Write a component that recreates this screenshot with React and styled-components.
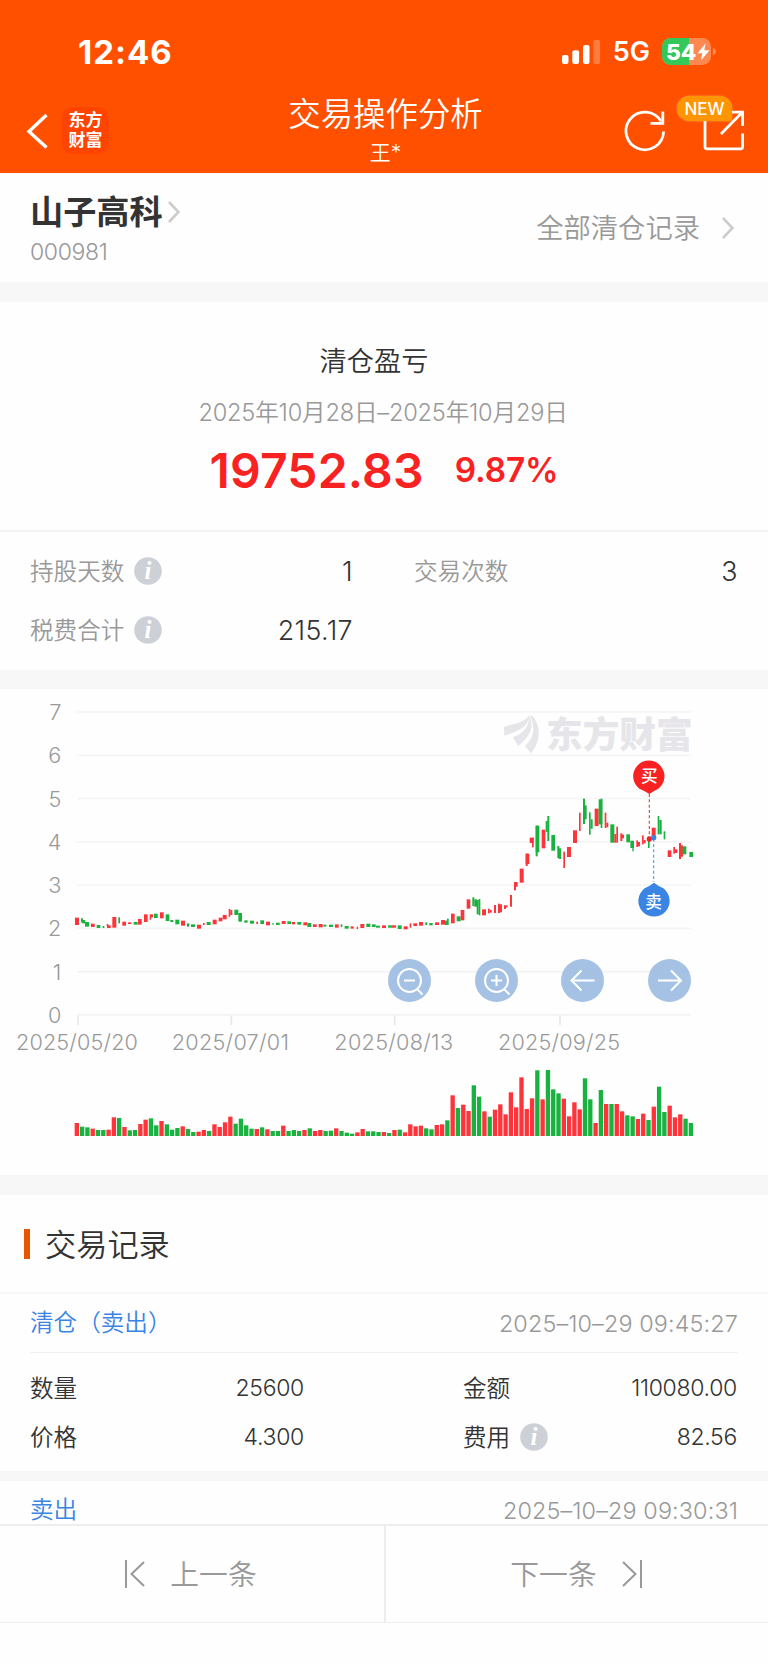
import React from "react"
import styled, { createGlobalStyle } from "styled-components"

const GlobalStyle = createGlobalStyle`
  * {
    box-sizing: border-box;
  }
  body {
    margin: 0;
    background: #fefefe;
    color: #333;
    font-family: Inter, "Noto Sans CJK SC", sans-serif;
    font-weight: 350;
    -webkit-font-smoothing: antialiased;
  }
  svg {
    display: block;
    flex: none;
  }
`
const Page = styled.div`
  width: 768px;
  height: 1663px;
  display: flex;
  flex-direction: column;
  overflow: hidden;
  background: #fefefe;
`
const Header = styled.header`
  flex: 0 0 173px;
  background: #ff5000;
  color: #fff;
`
const StatusBar = styled.div`
  display: flex;
  align-items: center;
  justify-content: space-between;
  height: 87px;
  padding: 16px 52px 0 78px;
`
const Time = styled.div`
  font-size: 33px;
  font-weight: 700;
  letter-spacing: 1px;
`
const StatusRight = styled.div`
  display: flex;
  align-items: center;
  gap: 12px;
`
const Network = styled.span`
  font-size: 27px;
  font-weight: 600;
  line-height: 30px;
`
const NavBar = styled.div`
  display: grid;
  grid-template-columns: 1fr auto 1fr;
  align-items: center;
  height: 86px;
  padding: 1px 23px 0 26px;
`
const NavLeft = styled.div`
  display: flex;
  align-items: center;
  gap: 14px;
`
const AppBadge = styled.div`
  width: 47px;
  height: 47px;
  padding-top: 4px;
  border-radius: 10px;
  background: #ff4400;
  font-size: 17px;
  font-weight: 700;
  line-height: 19.5px;
  text-align: center;
`
const NavTitle = styled.div`
  text-align: center;
`
const Title = styled.div`
  font-size: 32.4px;
  line-height: 44px;
`
const SubTitle = styled.div`
  font-size: 21px;
  line-height: 32px;
`
const NavRight = styled.div`
  display: flex;
  justify-content: flex-end;
  gap: 37px;
`
const ShareWrapper = styled.div`
  position: relative;
  height: 42px;
`
const NewTag = styled.span`
  position: absolute;
  left: -26px;
  top: -14px;
  width: 55px;
  height: 25px;
  border-radius: 13px 13px 4px 13px;
  background: #ff9500;
  box-shadow: 0 0 2px rgba(255, 200, 120, 0.8);
  font-size: 17px;
  font-weight: 500;
  line-height: 26px;
  text-align: center;
`
const Gap = styled.div`
  flex: 0 0 ${({ size }) => size}px;
  background: #f7f7f7;
`
const StockBar = styled.section`
  flex: 0 0 109px;
  display: flex;
  justify-content: space-between;
  padding: 0 34px 0 30px;
`
const StockName = styled.div`
  display: flex;
  align-items: center;
  gap: 5px;
  margin-top: 14px;
  height: 49px;
  font-size: 33.2px;
  font-weight: 700;
`
const Lifted = styled.span`
  margin-top: -${({ by }) => by}px;
`
const StockCode = styled.div`
  font-size: 23px;
  line-height: 32px;
  letter-spacing: -0.35px;
  color: #999;
`
const AllRecords = styled.div`
  display: flex;
  align-items: center;
  gap: 22px;
  font-size: 27.3px;
  color: #999;
`
const Summary = styled.section`
  flex: 0 0 230px;
  border-bottom: 2px solid #f4f4f4;
  text-align: center;
`
const SummaryTitle = styled.div`
  padding: 40px 20px 0 0;
  font-size: 27.2px;
  line-height: 40px;
`
const SummaryDate = styled.div`
  padding: 13px 2px 0 0;
  font-size: 23.6px;
  line-height: 36px;
  letter-spacing: -0.2px;
  color: #999;
`
const Profit = styled.div`
  display: flex;
  align-items: center;
  justify-content: center;
  height: 78px;
  gap: 31px;
  color: #f82222;
  font-weight: 600;
`
const Amount = styled.span`
  font-size: 48px;
  letter-spacing: 0.2px;
`
const Percent = styled.span`
  font-size: 33.4px;
  letter-spacing: -0.1px;
`
const Stats = styled.section`
  flex: 0 0 138px;
  display: grid;
  grid-template-columns: 323px 324px;
  grid-auto-rows: 59px;
  column-gap: 61px;
  padding: 9px 30px;
`
const Cell = styled.div`
  display: flex;
  align-items: center;
  justify-content: space-between;
`
const Label = styled.span`
  display: flex;
  align-items: center;
  gap: 10px;
  font-size: 23.6px;
  color: ${({ dark }) => (dark ? "#333" : "#999")};
`
const Value = styled.span`
  font-size: ${({ small }) => (small ? 23 : 26.8)}px;
  letter-spacing: ${({ small }) => (small ? -0.3 : 0.4)}px;
  color: #333;
`
const ChartPanel = styled.section`
  flex: 0 0 486px;
  position: relative;
`
const ChartTools = styled.div`
  position: absolute;
  left: 388px;
  top: 270px;
  width: 303px;
  display: flex;
  justify-content: space-between;
`
const ToolButton = styled.div`
  width: 43px;
  height: 43px;
  border-radius: 50%;
  background: rgba(150, 184, 224, 0.86);
`
const RecordsTitle = styled.div`
  flex: 0 0 99px;
  display: flex;
  align-items: center;
  gap: 15px;
  padding-left: 24px;
  border-bottom: 2px solid #f6f6f6;
  font-size: 31.2px;
`
const TitleMark = styled.i`
  width: 6px;
  height: 30px;
  background: #e85500;
`
const RecordHead = styled.div`
  flex: 0 0 59px;
  display: flex;
  align-items: center;
  justify-content: space-between;
  margin: 0 30px;
  border-bottom: 1px solid #f1f1f1;
`
const RecordType = styled.span`
  margin-top: -1px;
  font-size: 23.6px;
  line-height: 30px;
  color: #3a84e4;
`
const RecordTime = styled.span`
  font-size: 23.4px;
  letter-spacing: 0.12px;
  color: #999;
`
const RecordBody = styled.div`
  flex: 0 0 118px;
  display: grid;
  grid-template-columns: 274px 274px;
  grid-auto-rows: 49px;
  justify-content: space-between;
  padding: 10px 31px 10px 30px;
`
const Content = styled.main`
  flex: 1 1 0;
  min-height: 0;
  overflow: hidden;
  display: flex;
  flex-direction: column;
`
const Pager = styled.footer`
  flex: 0 0 139px;
  display: grid;
  grid-template-columns: 1fr 1fr;
  align-items: start;
  border-top: 2px solid #ededed;
`
const PagerItem = styled.div`
  display: flex;
  align-items: center;
  justify-content: center;
  gap: 25px;
  height: 97px;
  padding-right: 2px;
  border-bottom: 1px solid #f0f0f0;
  border-left: ${({ divided }) => (divided ? "2px solid #ededed" : "none")};
  font-size: 28.8px;
  color: #999;
`

const RED = "#ff333a"
const GREEN = "#18b23e"

// chart units are a third of a pixel: [x, y, width, height, colour]
const candles = [
  [225, 683, 12, 22, "r"], [243, 685, 6, 12, "g"], [246, 690, 9, 10, "g"], [255, 696, 12, 14, "g"],
  [273, 701, 11, 10, "r"], [290, 705, 11, 9, "g"], [308, 708, 5, 6, "g"], [320, 702, 5, 6, "r"],
  [321, 706, 11, 8, "r"], [337, 681, 12, 32, "r"], [355, 682, 5, 18, "g"], [367, 695, 11, 12, "r"],
  [384, 697, 10, 5, "r"], [401, 696, 12, 8, "g"], [414, 687, 11, 17, "r"], [432, 673, 11, 23, "r"],
  [449, 673, 5, 16, "r"], [453, 673, 6, 9, "r"], [462, 671, 11, 13, "g"], [480, 667, 11, 18, "r"],
  [497, 673, 11, 20, "g"], [511, 690, 9, 6, "g"], [526, 689, 12, 14, "g"], [543, 692, 12, 15, "r"],
  [561, 700, 7, 10, "g"], [573, 703, 12, 8, "g"], [591, 704, 12, 12, "r"], [609, 699, 5, 6, "r"],
  [620, 696, 12, 9, "g"], [638, 689, 12, 14, "r"], [656, 683, 11, 11, "r"], [668, 675, 12, 13, "r"],
  [686, 657, 5, 23, "r"], [691, 660, 6, 15, "r"], [703, 659, 12, 16, "g"], [715, 669, 11, 26, "g"],
  [733, 691, 10, 7, "g"], [750, 692, 12, 9, "g"], [769, 695, 5, 7, "r"], [781, 691, 11, 11, "g"],
  [798, 695, 12, 11, "r"], [817, 699, 4, 5, "g"], [828, 698, 11, 7, "g"], [845, 693, 12, 9, "r"],
  [862, 694, 11, 8, "g"], [875, 696, 10, 7, "r"], [892, 696, 12, 8, "g"], [910, 697, 12, 9, "r"],
  [922, 699, 12, 12, "g"], [939, 703, 11, 8, "r"], [956, 702, 12, 10, "r"], [970, 704, 9, 6, "g"],
  [987, 704, 12, 7, "g"], [1005, 703, 11, 10, "r"], [1022, 703, 5, 8, "g"], [1034, 708, 12, 8, "g"],
  [1052, 709, 9, 7, "r"], [1070, 710, 4, 7, "r"], [1081, 702, 12, 12, "r"], [1099, 701, 12, 10, "g"],
  [1116, 703, 11, 8, "g"], [1128, 707, 12, 6, "g"], [1146, 706, 12, 8, "r"], [1164, 706, 12, 7, "g"],
  [1176, 706, 12, 7, "r"], [1193, 706, 12, 11, "g"], [1211, 709, 12, 9, "r"], [1229, 700, 5, 13, "r"],
  [1240, 700, 11, 8, "r"], [1257, 696, 12, 11, "r"], [1276, 697, 6, 8, "g"], [1288, 699, 10, 7, "g"],
  [1305, 697, 12, 8, "r"], [1323, 690, 12, 14, "r"], [1335, 692, 8, 13, "g"], [1341, 686, 5, 19, "g"],
  [1353, 671, 11, 29, "r"], [1370, 679, 12, 15, "g"], [1382, 660, 11, 31, "r"], [1400, 628, 11, 28, "r"],
  [1417, 622, 6, 26, "g"], [1423, 628, 8, 22, "g"], [1430, 630, 6, 43, "g"], [1436, 627, 5, 49, "g"],
  [1446, 658, 12, 18, "r"], [1464, 656, 5, 14, "r"], [1469, 660, 6, 8, "r"], [1482, 645, 6, 24, "r"],
  [1494, 641, 6, 28, "r"], [1500, 643, 6, 24, "r"], [1512, 646, 6, 11, "r"], [1517, 646, 6, 6, "r"],
  [1530, 615, 6, 35, "r"], [1542, 576, 6, 25, "r"], [1547, 576, 6, 14, "r"], [1559, 536, 12, 42, "r"],
  [1577, 491, 11, 31, "r"], [1577, 491, 6, 37, "r"], [1589, 443, 12, 16, "r"], [1596, 443, 5, 29, "r"],
  [1607, 407, 11, 80, "g"], [1607, 407, 6, 92, "g"], [1625, 419, 11, 56, "r"], [1637, 393, 6, 33, "g"],
  [1642, 378, 6, 75, "g"], [1654, 435, 11, 47, "g"], [1672, 468, 6, 36, "g"], [1676, 475, 7, 32, "g"],
  [1690, 485, 5, 49, "r"], [1701, 471, 12, 30, "r"], [1719, 421, 12, 38, "r"], [1737, 368, 5, 55, "r"],
  [1749, 326, 6, 76, "g"], [1754, 346, 6, 42, "g"], [1767, 367, 5, 67, "g"], [1772, 388, 6, 28, "g"],
  [1784, 356, 12, 52, "r"], [1796, 328, 11, 75, "g"], [1802, 326, 5, 88, "g"], [1814, 368, 5, 46, "r"],
  [1819, 398, 6, 14, "r"], [1831, 403, 12, 55, "g"], [1843, 432, 6, 26, "r"], [1849, 410, 5, 48, "r"],
  [1861, 430, 6, 23, "r"], [1866, 434, 6, 11, "r"], [1879, 433, 11, 24, "g"], [1891, 452, 11, 22, "g"],
  [1897, 470, 4, 14, "g"], [1909, 451, 5, 20, "r"], [1914, 456, 6, 13, "r"], [1926, 436, 5, 27, "r"],
  [1931, 450, 6, 10, "r"], [1944, 440, 5, 34, "g"], [1955, 413, 12, 25, "r"], [1973, 378, 5, 55, "g"],
  [1978, 390, 7, 43, "g"], [1991, 424, 5, 24, "g"], [2003, 481, 11, 20, "r"], [2020, 471, 5, 20, "r"],
  [2025, 478, 7, 11, "r"], [2037, 459, 6, 48, "r"], [2043, 466, 6, 34, "r"], [2048, 469, 11, 24, "g"],
  [2068, 486, 11, 15, "g"],
]

const volumes = (
  "r39 g28 g26 r22 g18 g18 r19 r56 g54 r27 g17 g18 r36 r49 g53 g32 r45 g35 g19 g24 r29 g21 g12 r13 r18 g15 r35 r27 r41 r58 " +
  "g37 g52 g32 g22 r21 g26 r20 g15 g15 r31 g15 g18 g15 r18 g23 r15 r18 g15 g16 r23 g15 g10 g7 r11 r21 g14 g14 g12 r12 g9 " +
  "r18 g19 r11 r35 r29 r31 g23 g20 r33 r35 g47 r122 g84 r94 r75 g152 g118 r74 g58 r79 r95 r65 r131 r86 r176 r81 r113 g197 r110 g198 " +
  "g140 g128 r112 r59 r101 r80 g173 g110 r39 g138 r96 g96 r96 r74 g62 g59 r51 r67 g48 r88 g148 g72 r91 r56 r65 g52 g39"
).split(" ")

const yAxis = [7, 6, 5, 4, 3, 2, 1, 0]
const xAxis = [
  { x: 234, label: "2025/05/20", length: 366 },
  { x: 694, label: "2025/07/01", length: 352 },
  { x: 1184, label: "2025/08/13", length: 356 },
  { x: 1680, label: "2025/09/25", length: 366 },
]

function Chart() {
  return (
    <svg width="768" height="486" viewBox="0 -3 2304 1458">
      <g stroke="#f4f4f4" strokeWidth="5">
        {yAxis.map((n) => (
          <path key={n} d={`M231 ${974.5 - n * 129.8}H2073`} />
        ))}
      </g>
      <g fill="#999" fontSize="65">
        {yAxis.map((n) => (
          <text key={n} x="184" y={999 - n * 129.8} textAnchor="end">{n}</text>
        ))}
        {xAxis.map(({ x, label, length }) => (
          <g key={label}>
            <path d={`M${x} 977V1005`} stroke="#e8e8e8" strokeWidth="5" />
            <text x={x - length / 2 - 3} y="1080" textLength={length}>{label}</text>
          </g>
        ))}
      </g>
      <g fill="#e6e6ea">
        <path d="M1512 111C1530 101 1568 104 1589 75C1583 110 1566 120 1513 137Z" />
        <path d="M1539 142C1575 129 1588 104 1587 77C1605 109 1590 140 1554 168Z" />
        <path d="M1596 77C1627 109 1621 159 1592 190L1575 167C1603 143 1607 113 1590 77Z" />
        <text x="1638" y="174" fontSize="110" fontWeight="900" textLength="440" lengthAdjust="spacingAndGlyphs">东方财富</text>
      </g>
      {candles.map(([x, y, w, h, c]) => (
        <rect key={`${x}-${y}`} x={x} y={y} width={w} height={h} fill={c === "r" ? RED : GREEN} />
      ))}
      {volumes.map((v, i) => (
        <rect
          key={i}
          x={224 + i * 15.88}
          y={1338 - v.slice(1)}
          width="13"
          height={v.slice(1)}
          fill={v[0] === "r" ? RED : GREEN}
        />
      ))}
      <path d="M1948 312V446" stroke="#e0454a" strokeWidth="3.5" strokeDasharray="9 7" />
      <path d="M1961 446V576" stroke="#5b9be6" strokeWidth="3.5" strokeDasharray="9 7" />
      <circle cx="1948" cy="447" r="8" fill="#f82222" />
      <circle cx="1961" cy="443" r="8" fill="#3a84e4" />
      <path d="M1948 312Q1938 304 1918 296A47 47 0 1 1 1975 296Q1958 304 1948 312Z" fill="#f82222" />
      <path d="M1962 578Q1972 586 1990 595A47 47 0 1 1 1934 595Q1952 586 1962 578Z" fill="#3a84e4" />
      <g fill="#fff" fontSize="50" fontWeight="500" textAnchor="middle">
        <text x="1948" y="276">买</text>
        <text x="1961" y="653">卖</text>
      </g>
    </svg>
  )
}

const toolIcons = [
  "M16 21.5h11M29.5 30.5l5 5M33 21.5a11.5 11.5 0 1 1-23 0a11.5 11.5 0 1 1 23 0",
  "M16 21.5h11M21.5 16v11M29.5 30.5l5 5M33 21.5a11.5 11.5 0 1 1-23 0a11.5 11.5 0 1 1 23 0",
  "M33.5 21.5h-23M20.5 11.5l-10 10l10 10",
  "M10 21.5h23M23 11.5l10 10l-10 10",
]

function Chevron() {
  return (
    <svg width="12" height="22" viewBox="0 0 12 22" fill="none" stroke="#ccc" strokeWidth="2.6">
      <path d="M1 1L10.5 11L1 21" />
    </svg>
  )
}

function InfoIcon() {
  return (
    <svg width="28" height="28" viewBox="0 0 28 28">
      <circle cx="14" cy="14" r="13.8" fill="#cdd0d6" />
      <text x="14" y="22" fill="#fff" fontSize="25" fontStyle="italic" fontWeight="700" fontFamily="Liberation Serif, serif" textAnchor="middle">i</text>
    </svg>
  )
}

function Status() {
  return (
    <StatusBar>
      <Time>12:46</Time>
      <StatusRight>
        <svg width="40" height="26" viewBox="0 0 40 26" fill="#fff">
          <rect x="1" y="16" width="6.5" height="9" rx="2" />
          <rect x="11.3" y="11.3" width="6.8" height="13.7" rx="2" />
          <rect x="22" y="6" width="6.5" height="19" rx="2" />
          <rect x="32.3" y="1" width="6.8" height="24" rx="2" opacity="0.25" />
        </svg>
        <Network>5G</Network>
        <svg width="54" height="27" viewBox="0 0 54 27">
          <rect width="49" height="27" rx="8.5" fill="#ff8850" />
          <path d="M8.5 0H27V27H8.5A8.5 8.5 0 0 1 0 18.5V8.5A8.5 8.5 0 0 1 8.5 0Z" fill="#34c759" />
          <path d="M50.8 9.5Q54 11 54 13.5T50.8 17.5Z" fill="#ff8850" />
          <text x="4" y="21.5" fill="#fff" fontSize="22" fontWeight="800" textLength="30.5" lengthAdjust="spacingAndGlyphs">54</text>
          <path d="M43.5 5.5L35.5 15.3H40.3L39 22.5L47.5 12.2H42.3Z" fill="#fff" />
        </svg>
      </StatusRight>
    </StatusBar>
  )
}

function Nav() {
  return (
    <NavBar>
      <NavLeft>
        <svg width="22" height="38" viewBox="0 0 22 38" fill="none" stroke="#fff" strokeWidth="3.4">
          <path d="M20.5 3L3 19.5L20.5 35.5" />
        </svg>
        <AppBadge>东方<br />财富</AppBadge>
      </NavLeft>
      <NavTitle>
        <Title>交易操作分析</Title>
        <SubTitle>王*</SubTitle>
      </NavTitle>
      <NavRight>
        <svg width="42" height="42" viewBox="0 0 42 42" fill="none" stroke="#fff" strokeWidth="2.8">
          <path d="M39.6 21.5A18.8 18.8 0 1 1 37 11.4" />
          <path d="M38.8 1.5V13.3H26.5" />
        </svg>
        <ShareWrapper>
          <svg width="42" height="42" viewBox="0 0 42 42" fill="none" stroke="#fff" strokeWidth="2.8">
            <path d="M2 11V36.8Q2 38.8 4 38.8H37.6Q39.6 38.8 39.6 36.8V23.5" />
            <path d="M18 24L39 2.5M28 2.2H39.6V16" />
          </svg>
          <NewTag>NEW</NewTag>
        </ShareWrapper>
      </NavRight>
    </NavBar>
  )
}

function Item({ label, value, info, dark, small }) {
  return (
    <Cell>
      <Label dark={dark ? 1 : 0}><Lifted by={2}>{label}</Lifted>{info && <InfoIcon />}</Label>
      <Value small={small ? 1 : 0}>{value}</Value>
    </Cell>
  )
}

export default function App() {
  return (
    <Page>
      <GlobalStyle />
      <Header>
        <Status />
        <Nav />
      </Header>
      <Content>
        <StockBar>
          <div>
            <StockName><Lifted by={4}>山子高科</Lifted><Chevron /></StockName>
            <StockCode>000981</StockCode>
          </div>
          <AllRecords><Lifted by={3}>全部清仓记录</Lifted><Chevron /></AllRecords>
        </StockBar>
        <Gap size={20} />
        <Summary>
          <SummaryTitle>清仓盈亏</SummaryTitle>
          <SummaryDate>2025年10月28日–2025年10月29日</SummaryDate>
          <Profit>
            <Amount>19752.83</Amount>
            <Percent>9.87%</Percent>
          </Profit>
        </Summary>
        <Stats>
          <Item label="持股天数" value="1" info />
          <Item label="交易次数" value="3" />
          <Item label="税费合计" value="215.17" info />
        </Stats>
        <Gap size={19} />
        <ChartPanel>
          <Chart />
          <ChartTools>
            {toolIcons.map((d) => (
              <ToolButton key={d}>
                <svg width="43" height="43" viewBox="0 0 43 43" fill="none" stroke="#fff" strokeWidth="2">
                  <path d={d} />
                </svg>
              </ToolButton>
            ))}
          </ChartTools>
        </ChartPanel>
        <Gap size={20} />
        <RecordsTitle><TitleMark /><Lifted by={3}>交易记录</Lifted></RecordsTitle>
        <RecordHead>
          <RecordType>清仓（卖出）</RecordType>
          <RecordTime>2025–10–29 09:45:27</RecordTime>
        </RecordHead>
        <RecordBody>
          <Item label="数量" value="25600" dark small />
          <Item label="金额" value="110080.00" dark small />
          <Item label="价格" value="4.300" dark small />
          <Item label="费用" value="82.56" info dark small />
        </RecordBody>
        <Gap size={10} />
        <RecordHead>
          <RecordType>卖出</RecordType>
          <RecordTime>2025–10–29 09:30:31</RecordTime>
        </RecordHead>
      </Content>
      <Pager>
        <PagerItem>
          <svg width="20" height="28" viewBox="0 0 20 28" fill="none" stroke="#999" strokeWidth="2">
            <path d="M1 0V28M19 2L6.5 14L19 26" />
          </svg>
          <Lifted by={4}>上一条</Lifted>
        </PagerItem>
        <PagerItem divided={1}>
          <Lifted by={4}>下一条</Lifted>
          <svg width="20" height="28" viewBox="0 0 20 28" fill="none" stroke="#999" strokeWidth="2">
            <path d="M19 0V28M1 2L13.5 14L1 26" />
          </svg>
        </PagerItem>
      </Pager>
    </Page>
  )
}
